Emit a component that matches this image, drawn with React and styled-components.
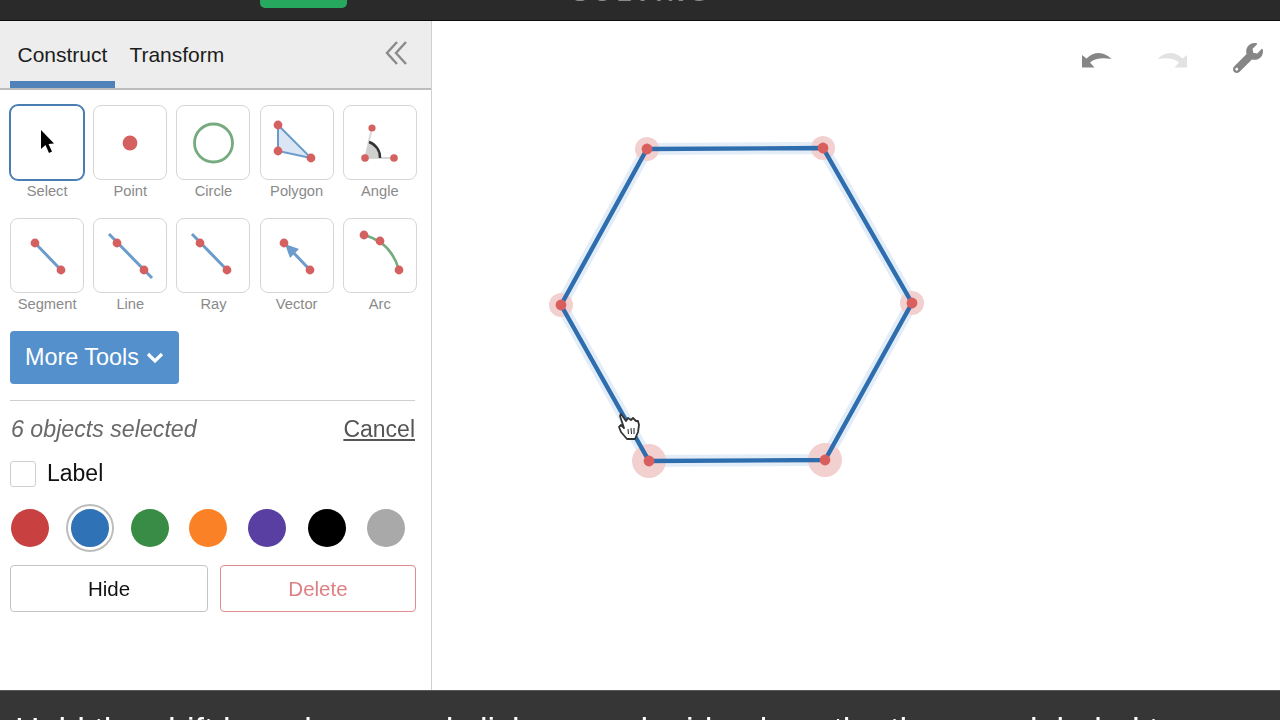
import React from "react";
import styled, { createGlobalStyle } from "styled-components";
import { FaWrench } from "react-icons/fa";

const Global = createGlobalStyle`
  html, body { margin: 0; padding: 0; width: 1280px; height: 720px; overflow: hidden; background: #fff; }
  #root { width: 1280px; height: 720px; }
  * { box-sizing: border-box; }
`;

const Page = styled.div`
  width: 1280px;
  height: 720px;
  display: flex;
  flex-direction: column;
  font-family: "Liberation Sans", Arial, sans-serif;
  filter: blur(0.45px);
  overflow: hidden;
`;

const TopBar = styled.header`
  height: 21px;
  flex: none;
  display: flex;
  align-items: flex-start;
  background: #2a2a2a;
  border-bottom: 1px solid #0c0c0c;
  overflow: hidden;
`;
const GreenPill = styled.div`
  width: 87px;
  height: 8px;
  margin-left: 260px;
  background: #27a85f;
  border-radius: 0 0 5px 5px;
`;
const TopTitle = styled.div`
  margin: -19px 0 0 225px;
  font-size: 24px;
  line-height: 24px;
  letter-spacing: 5px;
  font-weight: 700;
  color: #8a8a8a;
`;

const Main = styled.main`
  flex: 1;
  min-height: 0;
  display: flex;
`;

const Sidebar = styled.aside`
  width: 432px;
  flex: none;
  display: flex;
  flex-direction: column;
  background: #fff;
  border-right: 1px solid #cfcfcf;
`;
const SideHeader = styled.div`
  height: 69px;
  flex: none;
  display: flex;
  align-items: flex-end;
  gap: 7px;
  padding: 0 23px 0 10px;
  background: #ededed;
  border-bottom: 2px solid #bdbdbd;
`;
const Tab = styled.div`
  height: 60px;
  padding: 15px 7.5px 0;
  font-size: 21px;
  line-height: 24px;
  color: #1c1c1c;
  border-bottom: 7px solid ${(p) => (p.$active ? "#4f82b9" : "transparent")};
`;
const Collapse = styled.div`
  margin-left: auto;
  align-self: flex-start;
  margin-top: 19px;
  line-height: 0;
`;

const Body = styled.div`
  flex: 1;
  display: flex;
  flex-direction: column;
  padding: 15px 15px 0 10px;
`;
const ToolGrid = styled.div`
  width: 407px;
  display: grid;
  grid-template-columns: repeat(5, 74.2px);
  column-gap: 9px;
  row-gap: 18px;
`;
const Tool = styled.div`
  display: flex;
  flex-direction: column;
  align-items: center;
`;
const ToolBox = styled.div`
  width: 74px;
  height: 75px;
  border-radius: 8px;
  background: #fff;
  border: 1px solid ${(p) => (p.$selected ? "#4a7eb3" : "#d6d6d6")};
  box-shadow: ${(p) => (p.$selected ? "0 0 0 1px #4a7eb3" : "none")};
  line-height: 0;
`;
const ToolLabel = styled.div`
  margin-top: 2px;
  font-size: 14.7px;
  line-height: 18px;
  color: #8a8a8a;
`;
const MoreTools = styled.button`
  width: 169px;
  height: 53px;
  margin-top: 18px;
  padding: 0 0 0 15px;
  display: flex;
  align-items: center;
  gap: 7px;
  background: #5390cc;
  border: none;
  border-radius: 4px;
  color: #fff;
  font: 23.4px "Liberation Sans", Arial, sans-serif;
`;
const Divider = styled.hr`
  width: 405px;
  height: 1px;
  margin: 16px 0 0;
  border: none;
  background: #cfcfcf;
`;
const SelectionRow = styled.div`
  width: 405px;
  margin-top: 15px;
  display: flex;
  justify-content: space-between;
  align-items: center;
  line-height: 26px;
`;
const SelectedCount = styled.span`
  margin-left: 1px;
  font-size: 23.2px;
  font-style: italic;
  color: #696969;
`;
const CancelLink = styled.a`
  font-size: 23px;
  color: #555;
  text-decoration: underline;
`;
const LabelRow = styled.label`
  margin-top: 18px;
  display: flex;
  align-items: center;
  gap: 11px;
  font-size: 23px;
  color: #111;
`;
const Check = styled.span`
  width: 26px;
  height: 26px;
  border: 1px solid #cfcfcf;
  border-radius: 3px;
  background: #fff;
`;
const Swatches = styled.div`
  width: 396px;
  height: 50px;
  margin-top: 16px;
  display: grid;
  grid-template-columns: 40px 81px 58px 59px 60px 59px 40px;
  align-items: center;
`;
const Swatch = styled.span`
  width: ${(p) => (p.$selected ? "48px" : "38px")};
  height: ${(p) => (p.$selected ? "48px" : "38px")};
  margin-left: ${(p) => p.$offset}px;
  border-radius: 50%;
  background: ${(p) => p.$color};
  ${(p) => p.$selected && `border: 5px solid #fff; outline: 2px solid #bdbdbd; outline-offset: -2px;`}
`;
const Actions = styled.div`
  width: 406px;
  margin-top: 12px;
  display: grid;
  grid-template-columns: 198px 196px;
  column-gap: 12px;
`;
const ActionButton = styled.button`
  height: 47px;
  background: #fff;
  border: 1px solid ${(p) => (p.$danger ? "#e28c8f" : "#c4c4c4")};
  border-radius: 4px;
  color: ${(p) => (p.$danger ? "#de7f83" : "#111")};
  font: 20.5px "Liberation Sans", Arial, sans-serif;
`;

const Canvas = styled.section`
  position: relative;
  flex: 1;
  background: #fff;
`;
const Drawing = styled.svg`
  position: absolute;
  inset: 0;
  width: 100%;
  height: 100%;
`;
const CanvasTools = styled.div`
  position: absolute;
  top: 22px;
  right: 17px;
  display: flex;
  align-items: center;
  gap: 45px;
`;
const ToolIcon = styled.span`
  display: block;
  line-height: 0;
  color: ${(p) => p.$color};
`;

const BottomBar = styled.footer`
  height: 30px;
  flex: none;
  padding: 19px 0 0 15px;
  background: #363636;
  border-top: 1px solid #585858;
  overflow: hidden;
`;
const Caption = styled.div`
  font-size: 34px;
  line-height: 38px;
  color: #fff;
  white-space: nowrap;
`;

const RED = "#d4605f";
const BLUE = "#6c9ccb";
const GREEN = "#75ab7f";
const Dot = ({ x, y, r = 4.4 }) => <circle cx={x} cy={y} r={r} fill={RED} />;
const Icon = ({ children }) => (
  <svg width="72" height="73" viewBox="1 1 72 73">{children}</svg>
);

const tools = [
  { label: "Select", selected: true, icon: (
    <path d="M31 25 L31 44 L35.5 40 L39 48 L42 46.5 L38.5 39 L44 38.5 Z" fill="#000" />
  ) },
  { label: "Point", icon: <Dot x={37} y={38} r={7.4} /> },
  { label: "Circle", icon: <circle cx={37.5} cy={38} r={19} fill="none" stroke={GREEN} strokeWidth="2.8" /> },
  { label: "Polygon", icon: (
    <>
      <path d="M18 20 L18 46 L51 53 Z" fill="#dbe6f4" stroke={BLUE} strokeWidth="2" />
      <Dot x={18} y={20} /><Dot x={18} y={46} /><Dot x={51} y={53} />
    </>
  ) },
  { label: "Angle", icon: (
    <>
      <path d="M29 23 L22 53 L51 53" fill="none" stroke="#d8d8d8" strokeWidth="1.8" />
      <path d="M26 37 A16 16 0 0 1 37 53 L22 53 Z" fill="#d0d0d0" />
      <path d="M26 37 A16 16 0 0 1 37 53" fill="none" stroke="#333" strokeWidth="2.4" />
      <Dot x={29} y={23} r={3.6} /><Dot x={22} y={53} r={3.8} /><Dot x={51} y={53} r={3.8} />
    </>
  ) },
  { label: "Segment", icon: (
    <>
      <line x1="25" y1="25" x2="51" y2="52" stroke={BLUE} strokeWidth="3" />
      <Dot x={25} y={25} /><Dot x={51} y={52} />
    </>
  ) },
  { label: "Line", icon: (
    <>
      <line x1="16" y1="16" x2="59" y2="60" stroke={BLUE} strokeWidth="3" />
      <Dot x={24} y={25} /><Dot x={51} y={52} />
    </>
  ) },
  { label: "Ray", icon: (
    <>
      <line x1="16" y1="16" x2="51" y2="52" stroke={BLUE} strokeWidth="3" />
      <Dot x={24} y={25} /><Dot x={51} y={52} />
    </>
  ) },
  { label: "Vector", icon: (
    <>
      <line x1="30" y1="31" x2="50" y2="52" stroke={BLUE} strokeWidth="3" />
      <path d="M25 26 L39 31 L30 40 Z" fill={BLUE} />
      <Dot x={24} y={25} /><Dot x={50} y={52} />
    </>
  ) },
  { label: "Arc", icon: (
    <>
      <path d="M21 17 Q48 24 56 52" fill="none" stroke={GREEN} strokeWidth="2.6" />
      <Dot x={21} y={17} /><Dot x={37} y={23} /><Dot x={56} y={52} />
    </>
  ) },
];

const swatches = [
  { color: "#c8403f", offset: 1 },
  { color: "#2f72b5", selected: true, offset: 16 },
  { color: "#388c45", offset: 0 },
  { color: "#fb8127", offset: 0 },
  { color: "#5a3fa3", offset: 0 },
  { color: "#000000", offset: 0 },
  { color: "#a9a9a9", offset: 0 },
];

const hex = [[647, 149], [823, 148], [912, 303], [825, 460], [649, 461], [561, 305]];
const halos = [12, 12, 12, 17, 17, 12];
const hexPoints = hex.map((p) => p.join(",")).join(" ");

const UndoShape = ({ flip, color }) => (
  <svg width="31" height="19" viewBox="0 0 31 19">
    <path
      transform={flip ? "translate(31 0) scale(-1 1)" : undefined}
      fill={color}
      d="M1 6 L1 18.5 L13.5 18.5 L9 13.5 C14 9 22 8.5 30.5 10 C24 3 14 1 5.5 9.5 Z"
    />
  </svg>
);

export default function App() {
  return (
    <Page>
      <Global />
      <TopBar>
        <GreenPill />
        <TopTitle>SOLVING</TopTitle>
      </TopBar>
      <Main>
        <Sidebar>
          <SideHeader>
            <Tab $active>Construct</Tab>
            <Tab>Transform</Tab>
            <Collapse>
              <svg width="24" height="26" viewBox="0 0 24 26" fill="none" stroke="#8a8a8a" strokeWidth="2.4">
                <path d="M13 2 L3 13 L13 24" />
                <path d="M22 2 L12 13 L22 24" />
              </svg>
            </Collapse>
          </SideHeader>
          <Body>
            <ToolGrid>
              {tools.map((t) => (
                <Tool key={t.label}>
                  <ToolBox $selected={t.selected}><Icon>{t.icon}</Icon></ToolBox>
                  <ToolLabel>{t.label}</ToolLabel>
                </Tool>
              ))}
            </ToolGrid>
            <MoreTools>
              More Tools
              <svg width="18" height="12" viewBox="0 0 18 12" fill="none" stroke="#fff" strokeWidth="3.2">
                <path d="M2 2 L9 9 L16 2" />
              </svg>
            </MoreTools>
            <Divider />
            <SelectionRow>
              <SelectedCount>6 objects selected</SelectedCount>
              <CancelLink>Cancel</CancelLink>
            </SelectionRow>
            <LabelRow><Check />Label</LabelRow>
            <Swatches>
              {swatches.map((s) => (
                <Swatch key={s.color} $color={s.color} $selected={s.selected} $offset={s.offset} />
              ))}
            </Swatches>
            <Actions>
              <ActionButton>Hide</ActionButton>
              <ActionButton $danger>Delete</ActionButton>
            </Actions>
          </Body>
        </Sidebar>
        <Canvas>
          <Drawing viewBox="432 21 848 669">
            <polygon points={hexPoints} fill="none" stroke="#e3edf8" strokeWidth="12" />
            {hex.map(([x, y], i) => (
              <circle key={i} cx={x} cy={y} r={halos[i]} fill="#f3d0d0" />
            ))}
            <polygon points={hexPoints} fill="none" stroke="#2f6eae" strokeWidth="4.4" />
            {hex.map(([x, y], i) => (
              <circle key={i} cx={x} cy={y} r="5.4" fill="#d95f5e" />
            ))}
            <g transform="translate(618 412)" stroke="#333" strokeWidth="1.8" fill="#fff" strokeLinejoin="round">
              <path d="M3 2 L8 9 L10 6 L13 8 L15 6 L18 9 L20 9 L21 13 L20 20 L17 27 L9 27 L3 20 L1 15 L3 13 L6 16 L2 4 Z" />
              <path d="M10 17 L10.5 22 M13 16 L13.5 22 M16 16 L16 22" fill="none" strokeWidth="1.1" />
            </g>
          </Drawing>
          <CanvasTools>
            <ToolIcon><UndoShape color="#868686" /></ToolIcon>
            <ToolIcon><UndoShape flip color="#e2e2e2" /></ToolIcon>
            <ToolIcon $color="#868686"><FaWrench size={30} /></ToolIcon>
          </CanvasTools>
        </Canvas>
      </Main>
      <BottomBar>
        <Caption>Hold the shift key above, and click on each side along the the ones labeled to move them</Caption>
      </BottomBar>
    </Page>
  );
}
